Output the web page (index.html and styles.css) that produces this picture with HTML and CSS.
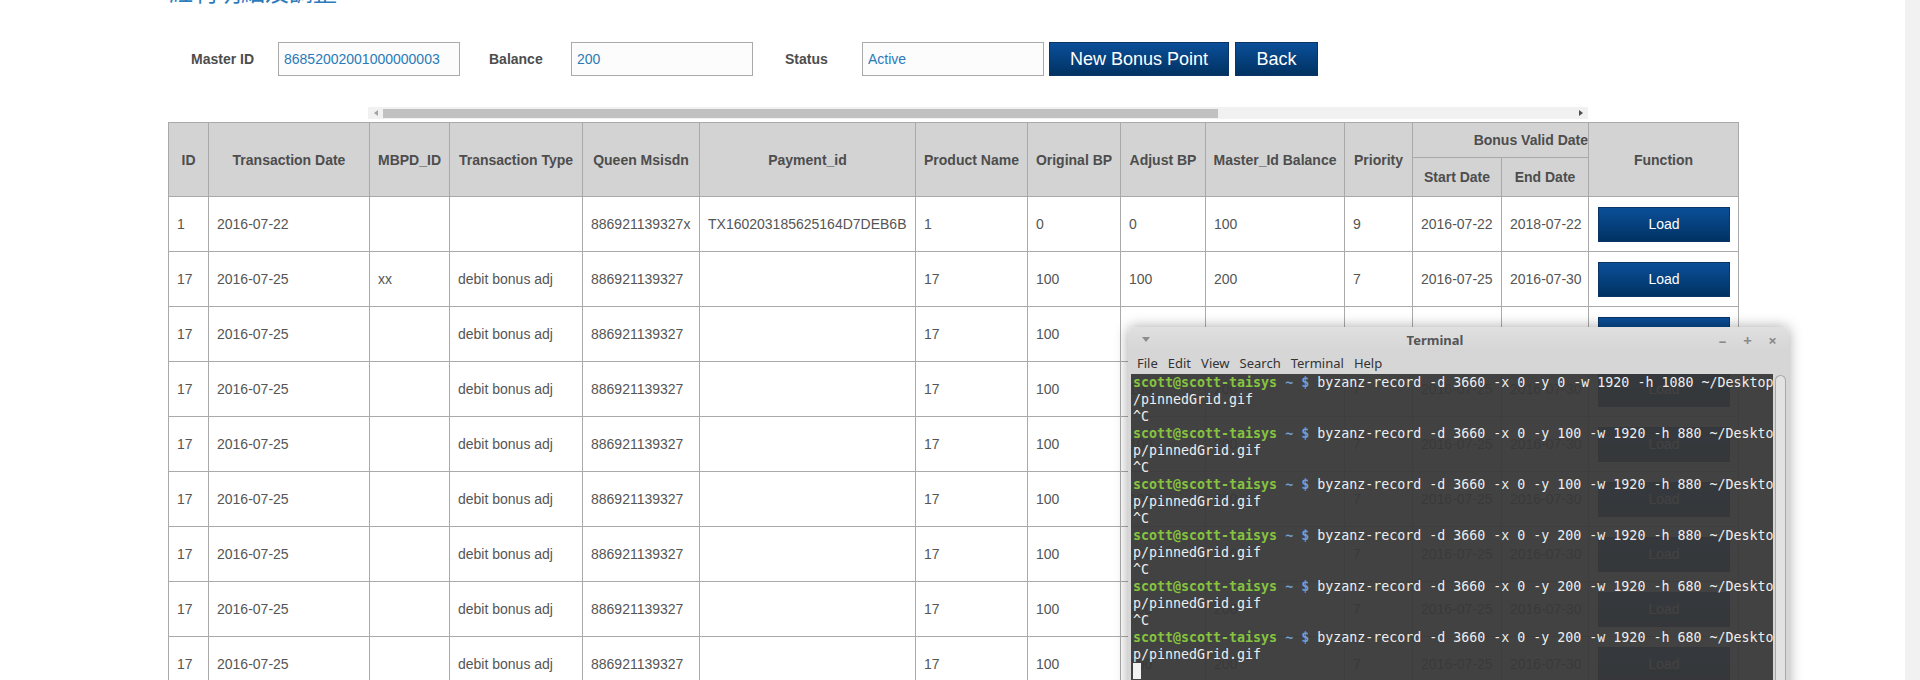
FILE: index.html
```html
<!DOCTYPE html>
<html lang="zh-Hant">
<head>
<meta charset="utf-8">
<title>紅利明細及調整</title>
<link rel="stylesheet" href="styles.css">
</head>
<body>
<div class="screen">
  <div class="page">
    <h1 class="title">紅利明細及調整</h1>
    <div class="form">
      <label class="lbl lbl-master">Master ID</label>
      <input class="field" type="text" value="86852002001000000003">
      <label class="lbl lbl-balance">Balance</label>
      <input class="field" type="text" value="200">
      <label class="lbl lbl-status">Status</label>
      <input class="field" type="text" value="Active">
      <button class="btn btn-new">New Bonus Point</button>
      <button class="btn btn-back">Back</button>
    </div>
    <div class="hscroll">
      <span class="arrow arrow-left"></span>
      <div class="thumb"></div>
      <span class="arrow arrow-right"></span>
    </div>
    <table class="grid">
      <colgroup>
        <col class="c-id"><col class="c-date"><col class="c-mbpd"><col class="c-type"><col class="c-queen">
        <col class="c-pay"><col class="c-prod"><col class="c-obp"><col class="c-abp"><col class="c-bal">
        <col class="c-pri"><col class="c-start"><col class="c-end"><col class="c-func">
      </colgroup>
      <thead>
        <tr class="h1">
          <th rowspan="2">ID</th>
          <th rowspan="2">Transaction Date</th>
          <th rowspan="2">MBPD_ID</th>
          <th rowspan="2">Transaction Type</th>
          <th rowspan="2">Queen Msisdn</th>
          <th rowspan="2">Payment_id</th>
          <th rowspan="2">Product Name</th>
          <th rowspan="2">Original BP</th>
          <th rowspan="2">Adjust BP</th>
          <th rowspan="2">Master_Id Balance</th>
          <th rowspan="2">Priority</th>
          <th colspan="2" class="th-valid">Bonus Valid Date</th>
          <th rowspan="2">Function</th>
        </tr>
        <tr class="h2">
          <th>Start Date</th>
          <th>End Date</th>
        </tr>
      </thead>
      <tbody>
        <tr><td>1</td><td>2016-07-22</td><td></td><td></td><td>886921139327x</td><td>TX160203185625164D7DEB6B</td><td>1</td><td>0</td><td>0</td><td>100</td><td>9</td><td>2016-07-22</td><td>2018-07-22</td><td class="fn"><button class="btn load">Load</button></td></tr>
        <tr><td>17</td><td>2016-07-25</td><td>xx</td><td>debit bonus adj</td><td>886921139327</td><td></td><td>17</td><td>100</td><td>100</td><td>200</td><td>7</td><td>2016-07-25</td><td>2016-07-30</td><td class="fn"><button class="btn load">Load</button></td></tr>
        <tr><td>17</td><td>2016-07-25</td><td></td><td>debit bonus adj</td><td>886921139327</td><td></td><td>17</td><td>100</td><td>100</td><td>200</td><td>7</td><td>2016-07-25</td><td>2016-07-30</td><td class="fn"><button class="btn load">Load</button></td></tr>
        <tr><td>17</td><td>2016-07-25</td><td></td><td>debit bonus adj</td><td>886921139327</td><td></td><td>17</td><td>100</td><td>100</td><td>200</td><td>7</td><td>2016-07-25</td><td>2016-07-30</td><td class="fn"><button class="btn load">Load</button></td></tr>
        <tr><td>17</td><td>2016-07-25</td><td></td><td>debit bonus adj</td><td>886921139327</td><td></td><td>17</td><td>100</td><td>100</td><td>200</td><td>7</td><td>2016-07-25</td><td>2016-07-30</td><td class="fn"><button class="btn load">Load</button></td></tr>
        <tr><td>17</td><td>2016-07-25</td><td></td><td>debit bonus adj</td><td>886921139327</td><td></td><td>17</td><td>100</td><td>100</td><td>200</td><td>7</td><td>2016-07-25</td><td>2016-07-30</td><td class="fn"><button class="btn load">Load</button></td></tr>
        <tr><td>17</td><td>2016-07-25</td><td></td><td>debit bonus adj</td><td>886921139327</td><td></td><td>17</td><td>100</td><td>100</td><td>200</td><td>7</td><td>2016-07-25</td><td>2016-07-30</td><td class="fn"><button class="btn load">Load</button></td></tr>
        <tr><td>17</td><td>2016-07-25</td><td></td><td>debit bonus adj</td><td>886921139327</td><td></td><td>17</td><td>100</td><td>100</td><td>200</td><td>7</td><td>2016-07-25</td><td>2016-07-30</td><td class="fn"><button class="btn load">Load</button></td></tr>
        <tr><td>17</td><td>2016-07-25</td><td></td><td>debit bonus adj</td><td>886921139327</td><td></td><td>17</td><td>100</td><td>100</td><td>200</td><td>7</td><td>2016-07-25</td><td>2016-07-30</td><td class="fn"><button class="btn load">Load</button></td></tr>
      </tbody>
    </table>

    <div class="terminal">
      <div class="term-title">
        <div class="term-menu-btn"><span class="tri"></span></div>
        <div class="term-name">Terminal</div>
        <div class="term-ctrls"><span>&#8211;</span><span>+</span><span>&#215;</span></div>
      </div>
      <div class="term-menu">
        <span>File</span><span>Edit</span><span>View</span><span>Search</span><span>Terminal</span><span>Help</span>
      </div>
      <div class="term-body">
        <div class="term-screen"><div><span class="pu">scott@scott-taisys</span> <span class="pd">~ $</span> byzanz-record -d 3660 -x 0 -y 0 -w 1920 -h 1080 ~/Desktop</div><div>/pinnedGrid.gif</div><div>^C</div><div><span class="pu">scott@scott-taisys</span> <span class="pd">~ $</span> byzanz-record -d 3660 -x 0 -y 100 -w 1920 -h 880 ~/Deskto</div><div>p/pinnedGrid.gif</div><div>^C</div><div><span class="pu">scott@scott-taisys</span> <span class="pd">~ $</span> byzanz-record -d 3660 -x 0 -y 100 -w 1920 -h 880 ~/Deskto</div><div>p/pinnedGrid.gif</div><div>^C</div><div><span class="pu">scott@scott-taisys</span> <span class="pd">~ $</span> byzanz-record -d 3660 -x 0 -y 200 -w 1920 -h 880 ~/Deskto</div><div>p/pinnedGrid.gif</div><div>^C</div><div><span class="pu">scott@scott-taisys</span> <span class="pd">~ $</span> byzanz-record -d 3660 -x 0 -y 200 -w 1920 -h 680 ~/Deskto</div><div>p/pinnedGrid.gif</div><div>^C</div><div><span class="pu">scott@scott-taisys</span> <span class="pd">~ $</span> byzanz-record -d 3660 -x 0 -y 200 -w 1920 -h 680 ~/Deskto</div><div>p/pinnedGrid.gif</div><div><span class="cursor"></span></div></div>
        <div class="term-sb"><div class="sb-thumb"></div></div>
      </div>
    </div>
  </div>
  <div class="vscroll"></div>
</div>
</body>
</html>
```

FILE: styles.css
```css
html, body {
  margin: 0;
  padding: 0;
  background: #ffffff;
}

body {
  font-family: "Liberation Sans", Arial, "Noto Sans CJK TC", sans-serif;
  font-size: 14px;
  color: #555555;
}

.screen {
  display: flex;
  width: 1920px;
  height: 680px;
  overflow: hidden;
}

.page {
  flex: 1;
  position: relative;
  padding-left: 168px;
  overflow: hidden;
}

.vscroll {
  width: 15px;
  background: #f1f1f1;
}

/* title */
.title {
  margin: -19px 0 0 1px;
  height: 24px;
  font-family: "Liberation Sans", "Noto Sans CJK TC", sans-serif;
  font-weight: 400;
  font-size: 24px;
  line-height: 24px;
  color: #2b7bbd;
}

/* form row */
.form {
  display: flex;
  align-items: center;
  height: 34px;
  margin-top: 37px;
}

.lbl {
  font-weight: 700;
  font-size: 14px;
  color: #4d4d4d;
}

.lbl-master { margin-left: 23px; width: 87px; }
.lbl-balance { margin-left: 29px; width: 82px; }
.lbl-status { margin-left: 32px; width: 77px; }

.field {
  box-sizing: border-box;
  width: 182px;
  height: 34px;
  margin: 0;
  padding: 0 0 0 5px;
  border: 1px solid #aaaaaa;
  background: #fcfcfc;
  font-family: "Liberation Sans", Arial, sans-serif;
  font-size: 14px;
  color: #2a7ab9;
  outline: none;
}

.btn {
  box-sizing: border-box;
  margin: 0;
  padding: 0;
  border: 1px solid #0a3566;
  background: linear-gradient(#0b4f99, #003262);
  color: #ffffff;
  font-family: "Liberation Sans", Arial, sans-serif;
  cursor: pointer;
}

.btn-new {
  margin-left: 5px;
  width: 180px;
  height: 34px;
  font-size: 18px;
}

.btn-back {
  margin-left: 6px;
  width: 83px;
  height: 34px;
  font-size: 18px;
}

/* horizontal scrollbar of grid */
.hscroll {
  position: relative;
  display: flex;
  align-items: center;
  margin: 31px 0 0 200px;
  width: 1220px;
  height: 12px;
  background: #f1f1f1;
}

.thumb {
  margin-left: 15px;
  width: 835px;
  height: 9px;
  background: #c1c1c1;
}

.arrow {
  position: absolute;
  top: 3px;
  width: 0;
  height: 0;
  border-top: 3px solid transparent;
  border-bottom: 3px solid transparent;
}

.arrow-left {
  left: 6px;
  border-right: 4px solid #a3a3a3;
}

.arrow-right {
  right: 5px;
  border-left: 4px solid #505050;
}

/* grid */
.grid {
  margin-top: 3px;
  border-collapse: collapse;
  table-layout: fixed;
  width: 1570px;
  font-size: 14px;
  color: #555555;
}

.c-id { width: 40px; }
.c-date { width: 161px; }
.c-mbpd { width: 80px; }
.c-type { width: 133px; }
.c-queen { width: 117px; }
.c-pay { width: 216px; }
.c-prod { width: 112px; }
.c-obp { width: 93px; }
.c-abp { width: 85px; }
.c-bal { width: 139px; }
.c-pri { width: 68px; }
.c-start { width: 89px; }
.c-end { width: 87px; }
.c-func { width: 150px; }

.grid th {
  background: #d3d3d3;
  border: 1px solid #a9a9a9;
  font-weight: 700;
  color: #4d4d4d;
  text-align: center;
  white-space: nowrap;
  overflow: hidden;
  padding: 0 2px;
}

.grid .h1 th { height: 34px; }
.grid .h2 th { height: 38px; }

.grid th.th-valid {
  text-align: right;
  padding-right: 0;
}

.grid td {
  height: 54px;
  padding: 0 8px;
  border: 1px solid #aaaaaa;
  background: #ffffff;
  white-space: nowrap;
  overflow: hidden;
}

.grid td.fn {
  padding: 0 9px;
}

.load {
  display: block;
  width: 132px;
  height: 35px;
  font-size: 14px;
}

/* terminal window */
.terminal {
  position: absolute;
  left: 1128px;
  top: 327px;
  width: 661px;
  height: 400px;
  display: flex;
  flex-direction: column;
  border-radius: 6px 6px 0 0;
  box-shadow: 0 0 14px rgba(0, 0, 0, 0.35);
  font-family: "Noto Sans", "DejaVu Sans", sans-serif;
}

.term-title {
  display: flex;
  align-items: center;
  height: 25px;
  background: linear-gradient(#e0e0e0, #d5d5d5);
  border-radius: 6px 6px 0 0;
}

.term-menu-btn {
  width: 32px;
  display: flex;
  justify-content: center;
  padding-left: 4px;
  box-sizing: border-box;
}

.tri {
  width: 0;
  height: 0;
  border-left: 4px solid transparent;
  border-right: 4px solid transparent;
  border-top: 5px solid #8c8c8c;
}

.term-name {
  flex: 1;
  text-align: center;
  font-size: 13px;
  font-weight: 700;
  color: #555555;
}

.term-ctrls {
  width: 79px;
  display: flex;
  box-sizing: border-box;
  padding-right: 4px;
  color: #8a8a8a;
  font-size: 15px;
  font-weight: 700;
}

.term-ctrls span {
  flex: 1;
  text-align: center;
}

.term-menu {
  display: flex;
  align-items: center;
  gap: 10px;
  height: 22px;
  padding-left: 9px;
  background: #d6d6d6;
  font-size: 13px;
  color: #333333;
}

.term-body {
  flex: 1;
  display: flex;
  border-left: 3px solid #d6d6d6;
}

.term-screen {
  width: 640px;
  padding-left: 2px;
  background: rgba(56, 56, 56, 0.95);
  font-family: "DejaVu Sans Mono", monospace;
  font-size: 13.3px;
  line-height: 17px;
  color: #eeeeec;
  white-space: pre;
  overflow: hidden;
}

.pu {
  color: #86c440;
  font-weight: 700;
}

.pd {
  color: #729fcf;
  font-weight: 700;
}

.cursor {
  display: inline-block;
  width: 8px;
  height: 16px;
  vertical-align: -3px;
  background: #f2f2f2;
}

.term-sb {
  flex: 1;
  background: #d6d6d6;
  padding: 1px 3px 0 2px;
}

.sb-thumb {
  height: 100%;
  box-sizing: border-box;
  border: 1px solid #a8a8a8;
  border-bottom: none;
  border-radius: 6px 6px 0 0;
  background: #e2e2e2;
}
```
